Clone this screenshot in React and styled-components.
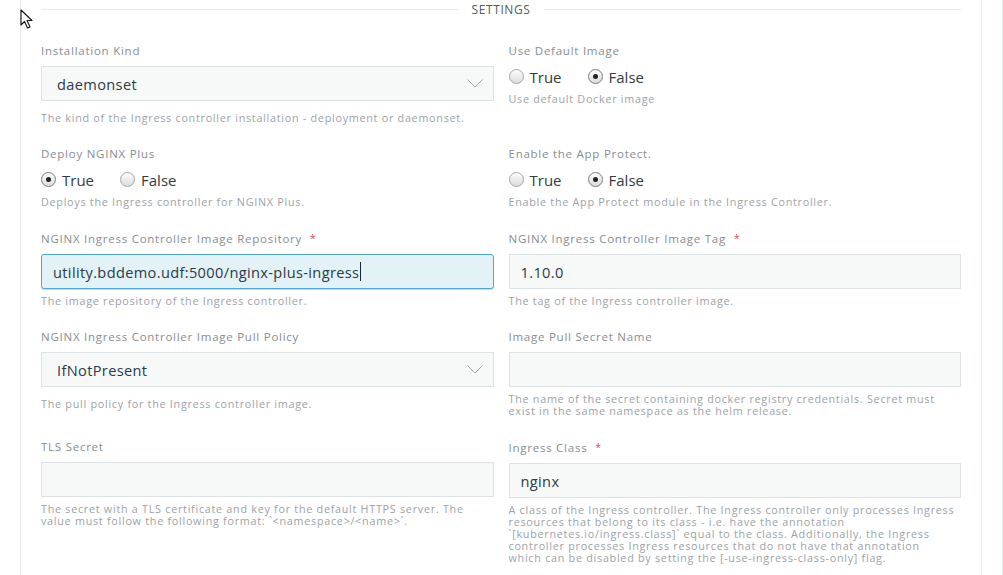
import * as React from "react"
import styled, { createGlobalStyle } from "styled-components"

// Colors
const lineColor = "#e7eaeb";
const labelColor = "#878d92";
const helpColor = "#9ca2a7";
const valueColor = "#2b3a48";
const fieldBg = "#f7f9f9";
const fieldBorder = "#dde3e4";
const focusBg = "#e3f2f7";
const focusBorder = "#4ea5dc";
const fontFamily = "'Open Sans', 'Noto Sans', sans-serif";

const PageStyle = createGlobalStyle`
  html, body {
    margin: 0;
    padding: 0;
    background: #fff;
    font-family: ${fontFamily};
    overflow: hidden;
  }
`;

const Page = styled.div`
  position: relative;
  width: 1002px;
  height: 575px;
  border-right: 1px solid ${lineColor};
`;

const Panel = styled.div`
  margin-left: 20px;
  width: 920px;
  height: 100%;
  padding: 0 20px;
  border-left: 1px solid ${lineColor};
  border-right: 1px solid ${lineColor};
`;

const SectionHeader = styled.div`
  display: flex;
  align-items: center;
  gap: 14px;
  height: 18px;
`;

const Rule = styled.div`
  flex: 1;
  height: 1px;
  background: ${lineColor};
`;

const SectionTitle = styled.span`
  font-size: 12px;
  letter-spacing: 0.6px;
  color: #555b60;
`;

const Grid = styled.div`
  display: grid;
  grid-template-columns: 1fr 1fr;
  column-gap: 15px;
  row-gap: 22px;
  margin-top: 25px;
`;

const Field = styled.div`
  display: flex;
  flex-direction: column;
  min-width: 0;
`;

const Label = styled.label`
  font-size: 11.5px;
  line-height: 16px;
  letter-spacing: 0.75px;
  color: ${labelColor};
  margin-bottom: 7px;
`;

const Required = styled.span`
  color: #e5454a;
  font-size: 10px;
  margin-left: 8px;
  vertical-align: 1px;
`;

const Help = styled.div`
  font-size: 10.8px;
  line-height: 12px;
  letter-spacing: 0.72px;
  color: ${helpColor};
  margin-top: 6px;
  padding-right: 5.5px;
`;

const InputBox = styled.div`
  box-sizing: border-box;
  height: 35px;
  display: flex;
  align-items: center;
  padding: 0 ${p => (p.$select ? "10px 0 15px" : "11px")};
  margin-bottom: ${p => (p.$select ? 5 : 0)}px;
  font-size: 14.6px;
  letter-spacing: 0.35px;
  color: ${valueColor};
  background: ${p => (p.$focused ? focusBg : fieldBg)};
  border: 1px solid ${p => (p.$focused ? focusBorder : fieldBorder)};
  border-radius: ${p => (p.$focused ? 3 : 0)}px;
  box-shadow: ${p => (p.$focused ? "0 1px 0 0 rgba(78,165,220,0.35)" : "none")};
  white-space: nowrap;
`;

const Value = styled.span`
  flex: 1;
`;

const Caret = styled.span`
  display: inline-block;
  width: 1px;
  height: 19px;
  margin-left: 1px;
  background: #1b2530;
`;

const Radios = styled.div`
  display: flex;
  align-items: center;
  height: 21px;
`;

const RadioOption = styled.span`
  display: inline-flex;
  align-items: center;
  gap: 6px;
  margin-right: 26px;
  font-size: 15px;
  color: #333a40;
`;

const RadioDot = styled.span`
  box-sizing: border-box;
  width: 15px;
  height: 15px;
  border-radius: 50%;
  border: 1px solid ${p => (p.$checked ? "#7c7c7c" : "#a6a6a6")};
  background: linear-gradient(#fdfdfd, #dcdcdc);
  display: flex;
  align-items: center;
  justify-content: center;
  &::after {
    content: "";
    width: 5px;
    height: 5px;
    border-radius: 50%;
    background: ${p => (p.$checked ? "#222" : "transparent")};
  }
`;

const Pointer = styled.svg`
  position: absolute;
  left: 20px;
  top: 9px;
`;

const Chevron = () => (
  <svg width="16" height="9" viewBox="0 0 16 9">
    <polyline points="0.5,0.5 8,8 15.5,0.5" fill="none" stroke="#a0a7ab" strokeWidth="1" />
  </svg>
);

const RadioGroup = ({ value }) => (
  <Radios>
    <RadioOption><RadioDot $checked={value} />True</RadioOption>
    <RadioOption><RadioDot $checked={!value} />False</RadioOption>
  </Radios>
);

const fields = [
  { label: "Installation Kind", kind: "select", value: "daemonset", help: "The kind of the Ingress controller installation - deployment or daemonset." },
  { label: "Use Default Image", kind: "radio", value: false, help: "Use default Docker image" },
  { label: "Deploy NGINX Plus", kind: "radio", value: true, help: "Deploys the Ingress controller for NGINX Plus." },
  { label: "Enable the App Protect.", kind: "radio", value: false, help: "Enable the App Protect module in the Ingress Controller." },
  { label: "NGINX Ingress Controller Image Repository", required: true, kind: "input", focused: true, value: "utility.bddemo.udf:5000/nginx-plus-ingress", help: "The image repository of the Ingress controller." },
  { label: "NGINX Ingress Controller Image Tag", required: true, kind: "input", value: "1.10.0", help: "The tag of the Ingress controller image." },
  { label: "NGINX Ingress Controller Image Pull Policy", kind: "select", value: "IfNotPresent", help: "The pull policy for the Ingress controller image." },
  { label: "Image Pull Secret Name", kind: "input", value: "", help: "The name of the secret containing docker registry credentials. Secret must exist in the same namespace as the helm release." },
  { label: "TLS Secret", kind: "input", value: "", help: "The secret with a TLS certificate and key for the default HTTPS server. The value must follow the following format: `<namespace>/<name>`." },
  { label: "Ingress Class", required: true, kind: "input", value: "nginx", help: "A class of the Ingress controller. The Ingress controller only processes Ingress resources that belong to its class - i.e. have the annotation `[kubernetes.io/ingress.class]` equal to the class. Additionally, the Ingress controller processes Ingress resources that do not have that annotation which can be disabled by setting the [-use-ingress-class-only] flag." },
];

const Control = ({ field }) => {
  if (field.kind === "radio") return <RadioGroup value={field.value} />;
  if (field.kind === "select") {
    return (
      <InputBox $select>
        <Value>{field.value}</Value>
        <Chevron />
      </InputBox>
    );
  }
  return (
    <InputBox $focused={field.focused}>
      <span>{field.value}</span>
      {field.focused && <Caret />}
    </InputBox>
  );
};

const App = () => {
  return (
    <React.Fragment>
      <PageStyle />
      <Page>
        <Panel>
          <SectionHeader>
            <Rule />
            <SectionTitle>SETTINGS</SectionTitle>
            <Rule />
          </SectionHeader>
          <Grid>
            {fields.map(f => (
              <Field key={f.label}>
                <Label>
                  {f.label}
                  {f.required && <Required>*</Required>}
                </Label>
                <Control field={f} />
                <Help>{f.help}</Help>
              </Field>
            ))}
          </Grid>
        </Panel>
        {/* mouse pointer */}
        <Pointer width="14" height="20" viewBox="0 0 14 20">
          <path d="M1 1 L1 16 L4.5 12.5 L7.5 19 L10 18 L7 11.5 L12 11.5 Z" fill="#fff" stroke="#111" strokeWidth="1.1" strokeLinejoin="round" />
        </Pointer>
      </Page>
    </React.Fragment>
  )
}

export default App
